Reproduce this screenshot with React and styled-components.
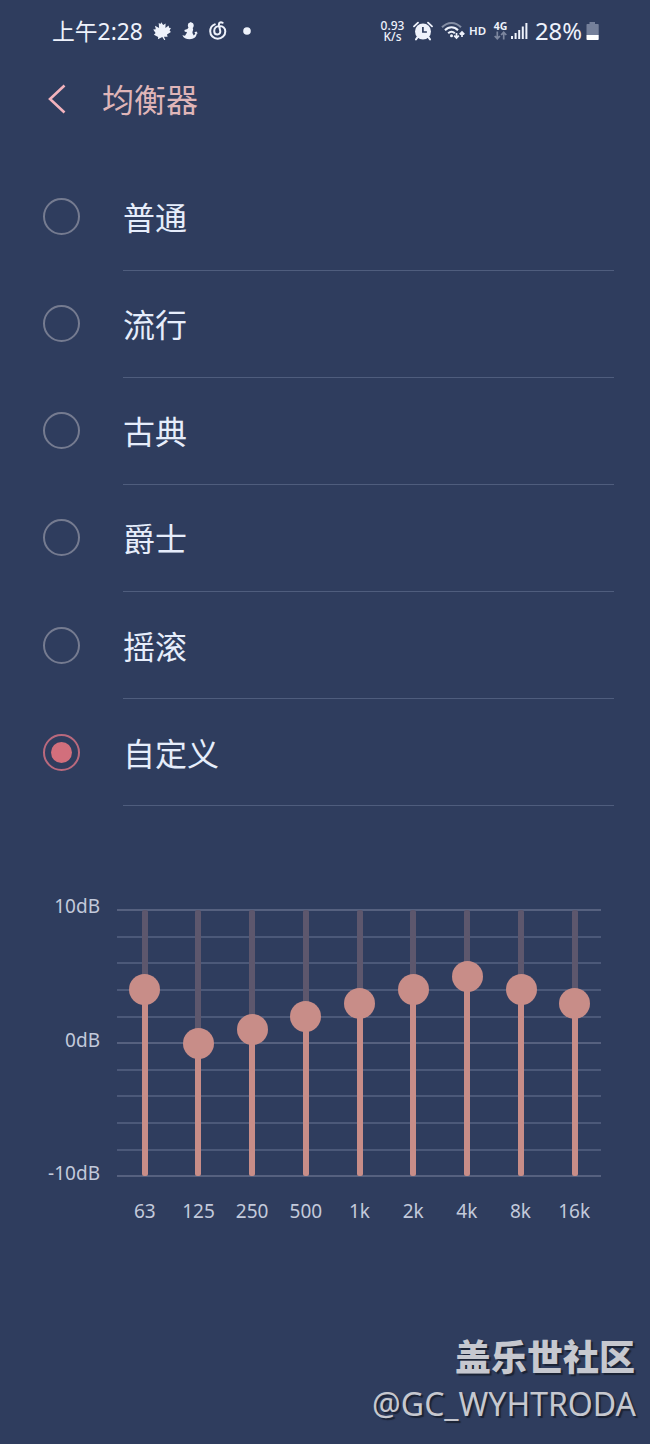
import React from 'react';
import styled, { createGlobalStyle } from 'styled-components';

const GlobalStyle = createGlobalStyle`
    * {
        box-sizing: border-box;
    }
    body {
        margin: 0;
        background: #2f3d5e;
        font-family: "Noto Sans", "Noto Sans CJK SC", sans-serif;
    }
`;

const Screen = styled.div`
    display: flex;
    flex-direction: column;
    width: 650px;
    height: 1444px;
    overflow: hidden;
    background: #2f3d5e;
`;

const StatusBar = styled.div`
    display: flex;
    align-items: center;
    height: 61px;
    padding: 0 50px 0 52px;
    color: #eef2fb;
`;

const StatusText = styled.span`
    width: ${props => props.$width}px;
    margin-right: ${props => props.$gap || 0}px;
    padding-top: ${props => props.$drop || 0}px;
    font-size: ${props => props.$size}px;
    line-height: 30px;
    white-space: nowrap;
`;

const StatusIcon = styled.span`
    display: flex;
    flex: none;
    margin-right: ${props => props.$gap || 0}px;
`;

const Spacer = styled.div`
    flex: 1;
`;

const Speed = styled.div`
    display: flex;
    flex-direction: column;
    align-items: center;
    width: 25px;
    margin-right: 8px;
    font-size: 12px;
    font-weight: 500;
    line-height: 11px;
`;

const HdLabel = styled.span`
    width: 17px;
    margin-right: 7px;
    font-size: 11.5px;
    font-weight: 600;
    line-height: 14px;
`;

const Network = styled.div`
    display: flex;
    flex-direction: column;
    align-items: center;
    width: 15px;
    margin-right: 3px;
    font-size: 10.5px;
    font-weight: 700;
    line-height: 10px;
`;

const Header = styled.header`
    display: flex;
    align-items: center;
    height: 76px;
    padding-left: 47px;
`;

const Title = styled.h1`
    margin: -2px 0 0 35px;
    color: #dfb5b8;
    font-family: "Noto Sans CJK SC", sans-serif;
    font-size: 32px;
    font-weight: 400;
    line-height: 40px;
`;

const PresetList = styled.div`
    display: flex;
    flex-direction: column;
    margin-top: 26.6px;
`;

const PresetRow = styled.div`
    display: flex;
    align-items: center;
    height: 107.1px;
    padding: 0 36px 0 43px;
`;

const Radio = styled.span`
    display: flex;
    flex: none;
    align-items: center;
    justify-content: center;
    width: 37px;
    height: 37px;
    margin-bottom: 1px;
    border: 2px solid ${props => (props.$checked ? '#b9697d' : '#757b90')};
    border-radius: 50%;
`;

const RadioDot = styled.span`
    width: 21px;
    height: 21px;
    border-radius: 50%;
    background: #d26f7c;
`;

const PresetLabel = styled.div`
    display: flex;
    flex: 1;
    align-items: center;
    height: 100%;
    margin-left: 43px;
    padding-bottom: 1px;
    border-bottom: 1px solid #4f5d7d;
    color: #e6edfb;
    font-family: "Noto Sans CJK SC", sans-serif;
    font-size: 32px;
`;

const Equalizer = styled.div`
    display: grid;
    grid-template-columns: 100px 484px;
    grid-template-rows: 268px auto;
    column-gap: 17px;
    margin-top: 103px;
    color: #c3cadb;
    font-size: 19px;
    line-height: 26px;
`;

const Scale = styled.div`
    display: flex;
    flex-direction: column;
    justify-content: space-between;
    height: 293px;
    margin-top: -16px;
    text-align: right;
`;

const Plot = styled.div`
    display: grid;
`;

const GridLines = styled.div`
    display: flex;
    grid-area: 1 / 1;
    flex-direction: column;
    justify-content: space-between;
`;

const GridLine = styled.div`
    height: 2px;
    background: ${props => (props.$major ? '#56617f' : '#4c5979')};
`;

const Faders = styled.div`
    display: grid;
    grid-area: 1 / 1;
    grid-template-columns: repeat(9, 1fr);
    padding: 1px 0;
`;

const Fader = styled.div`
    display: flex;
    flex-direction: column;
    align-items: center;
    padding-left: 1.4px;
`;

const Track = styled.div`
    flex: ${props => props.$amount} 0 0;
    width: 6px;
    border-radius: 2px;
    background: ${props => (props.$filled ? '#c88d88' : '#5d576d')};
`;

const Thumb = styled.div`
    z-index: 1;
    flex: none;
    width: 31px;
    height: 31px;
    margin: -15.5px 0;
    border-radius: 50%;
    background: #c88d88;
`;

const Frequencies = styled.div`
    display: grid;
    grid-column: 2;
    grid-template-columns: repeat(9, 1fr);
    margin-top: 20.5px;
    padding-left: 1px;
    text-align: center;
`;

const Watermark = styled.footer`
    display: flex;
    flex-direction: column;
    align-items: flex-end;
    margin-top: auto;
    padding: 0 14px 17px 0;
    color: #c6c8cf;
    text-shadow: 2px 2px 1px #1b2335;
`;

const Community = styled.div`
    margin-right: 1px;
    font-family: "Noto Sans CJK SC", sans-serif;
    font-size: 36px;
    font-weight: 900;
    line-height: 51px;
`;

const Author = styled.div`
    font-size: 32px;
    line-height: 46px;
`;

const presets = ['普通', '流行', '古典', '爵士', '摇滚', '自定义'];
const selected = '自定义';

const bands = [
    { name: '63', gain: 4 },
    { name: '125', gain: 0 },
    { name: '250', gain: 1 },
    { name: '500', gain: 2 },
    { name: '1k', gain: 3 },
    { name: '2k', gain: 4 },
    { name: '4k', gain: 5 },
    { name: '8k', gain: 4 },
    { name: '16k', gain: 3 }
];

const lines = [10, 8, 6, 4, 2, 0, -2, -4, -6, -8, -10];

const LeafIcon = () => (
    <svg width="18" height="18" viewBox="0 0 18 18" fill="currentColor">
        <path d="M8.200.2l2 2.800 2.400-1.400-.2 4.300 3.300-2.300.3 2.200 1.900.2-1.300 2.600 1.300 1.500-3.900 2.400.6 2.300-3.700-.1 1.400 3-.9.6-2.100-3.200-4.400 2.200.3-2.400-4.300-2.200 1.700-1.600L.2 7.600l2.600-.4-.8-3.500 4.100 2.400-.4-5 1.800 1z" />
    </svg>
);

// seated figure with a raised head and a curled tail
const FigureIcon = () => (
    <svg width="16" height="18" viewBox="0 0 16 18" fill="currentColor">
        <circle cx="8.800" cy="3.400" r="2.900" />
        <path d="M5.900 2.200 9 0l1 2z" />
        <path d="M6.500 5.500c2-.8 4.300-.3 4.600 1.500.2 1.600-.9 2.500-.6 4 .2 1 1.400 1.700 1.200 3.200H3C3.400 12.500 5 11.500 4.900 10L2.800 9.800 2.400 8l3-1z" />
        <path d="M.4 13c2.200 1.500 4.600 0 7.400.7 2.400.6 4.900-.2 5.500-2.400l-1-1 2.200-.9 1.300 2-1 .2c-.5 3.700-3 5.600-7.100 5.600-3.500 0-6.500-1.300-7.300-4.200z" />
    </svg>
);

const SpiralIcon = () => (
    <svg width="18" height="19" viewBox="0 0 18 19" fill="none" stroke="currentColor" strokeWidth="2" strokeLinecap="round">
        <path d="M5.800 3.300C2.900 4.500 1.200 7.200 1.200 10.200c0 4.200 3.300 7.500 7.500 7.500s7.600-3.200 7.600-7.300c0-3.200-2.400-5.500-5.700-5.500-3 0-5.400 2.200-5.400 5 0 2 1.400 3.500 3.200 3.500 2.100 0 3.200-1.700 2.800-3.600L10 4.200C9.600 1.800 11.400.500 13.600 1.800" />
    </svg>
);

const AlarmIcon = () => (
    <svg width="20" height="20" viewBox="0 0 20 20">
        <circle cx="10" cy="10.500" r="8" fill="currentColor" />
        <path d="M1 5.400 5 1.600M19 5.400l-4-3.800" stroke="currentColor" strokeWidth="1.800" strokeLinecap="round" />
        <path d="M4.600 16.200 3 18.400M15.400 16.200l1.600 2.200" stroke="currentColor" strokeWidth="2" strokeLinecap="round" />
        <path d="M9.900 6v5h4" fill="none" stroke="#2f3d5e" strokeWidth="1.700" />
    </svg>
);

const WifiIcon = () => (
    <svg width="25" height="19" viewBox="0 0 25 19" fill="none" stroke="currentColor" strokeWidth="2">
        <path d="M1 6.300C6.500.4 14.500.4 20 6.300" opacity=".45" />
        <path d="M4 9.200c3.800-4 9.200-4 13 0" />
        <path d="M7.200 12.200c2-2.100 4.600-2.100 6.600 0" />
        <circle cx="10.500" cy="14.700" r="1.500" fill="currentColor" stroke="none" />
        <path d="M15.500 12v5M13.200 14.700l2.300 2.300 2.300-2.300M21 16v-5M18.700 13.300 21 11l2.300 2.300" strokeWidth="1.700" />
    </svg>
);

const DataArrows = () => (
    <svg width="13" height="9" viewBox="0 0 13 9" fill="none" stroke="#7d879f" strokeWidth="1.700">
        <path d="M3.300.5v7M.7 5l2.600 2.700L5.900 5M9.700 8.500v-7M7.100 4l2.600-2.700L12.300 4" />
    </svg>
);

const SignalIcon = () => (
    <svg width="17" height="18" viewBox="0 0 17 18" fill="currentColor">
        <path d="M0 14h2v3H0zM3.600 11h2v6h-2zM7.200 8h2v9h-2zM10.800 4.500h2V17h-2zM14.400 1h2v16h-2z" />
    </svg>
);

const BatteryIcon = () => (
    <svg width="13" height="20" viewBox="0 0 13 20">
        <path d="M3.500 1h5.500v2H12a.7.700 0 0 1 .7.700V14H.5V3.700A.7.700 0 0 1 1.200 3h2.300z" fill="#75809a" />
        <path d="M.5 14h12.200v4.200a.8.800 0 0 1-.8.800H1.300a.8.800 0 0 1-.8-.8z" fill="#fff" />
    </svg>
);

const BackIcon = () => (
    <svg width="20" height="30" viewBox="0 0 20 30" fill="none" stroke="#f3b3bd" strokeWidth="2.600">
        <path d="M17.500 1.500 3 15l14.500 13.500" />
    </svg>
);

const NotificationDot = () => (
    <svg width="8" height="8" viewBox="0 0 8 8" fill="currentColor">
        <circle cx="4" cy="4" r="3.800" />
    </svg>
);

class App extends React.Component {
    constructor(props) {
        super(props);
        this.state = { preset: selected };
        this.handleSelect = this.handleSelect.bind(this);
    }

    handleSelect(preset) {
        this.setState({ preset });
    }

    render() {
        return (
            <Screen>
                <GlobalStyle />
                <StatusBar>
                    <StatusText $size={22.8} $width={92} $gap={9} $drop={2}>上午2:28</StatusText>
                    <StatusIcon $gap={11}><LeafIcon /></StatusIcon>
                    <StatusIcon $gap={11}><FigureIcon /></StatusIcon>
                    <StatusIcon $gap={16}><SpiralIcon /></StatusIcon>
                    <StatusIcon><NotificationDot /></StatusIcon>
                    <Spacer />
                    <Speed>
                        <span>0.93</span>
                        <span>K/s</span>
                    </Speed>
                    <StatusIcon $gap={8}><AlarmIcon /></StatusIcon>
                    <StatusIcon $gap={3}><WifiIcon /></StatusIcon>
                    <HdLabel>HD</HdLabel>
                    <Network>
                        <span>4G</span>
                        <DataArrows />
                    </Network>
                    <StatusIcon $gap={7}><SignalIcon /></StatusIcon>
                    <StatusText $size={23.8} $width={48} $gap={3} $drop={1}>28%</StatusText>
                    <StatusIcon $gap={1}><BatteryIcon /></StatusIcon>
                </StatusBar>
                <Header>
                    <BackIcon />
                    <Title>均衡器</Title>
                </Header>
                <PresetList>
                    {presets.map(name => (
                        <PresetRow key={name} onClick={() => this.handleSelect(name)}>
                            <Radio $checked={name === this.state.preset}>
                                {name === this.state.preset && <RadioDot />}
                            </Radio>
                            <PresetLabel>{name}</PresetLabel>
                        </PresetRow>
                    ))}
                </PresetList>
                <Equalizer>
                    <Scale>
                        <span>10dB</span>
                        <span>0dB</span>
                        <span>-10dB</span>
                    </Scale>
                    <Plot>
                        <GridLines>
                            {lines.map(db => <GridLine key={db} $major={db % 10 === 0} />)}
                        </GridLines>
                        <Faders>
                            {bands.map(band => (
                                <Fader key={band.name}>
                                    <Track $amount={10 - band.gain} />
                                    <Thumb />
                                    <Track $filled $amount={10 + band.gain} />
                                </Fader>
                            ))}
                        </Faders>
                    </Plot>
                    <Frequencies>
                        {bands.map(band => <span key={band.name}>{band.name}</span>)}
                    </Frequencies>
                </Equalizer>
                <Watermark>
                    <Community>盖乐世社区</Community>
                    <Author>@GC_WYHTRODA</Author>
                </Watermark>
            </Screen>
        )
    }
}

export default App;
